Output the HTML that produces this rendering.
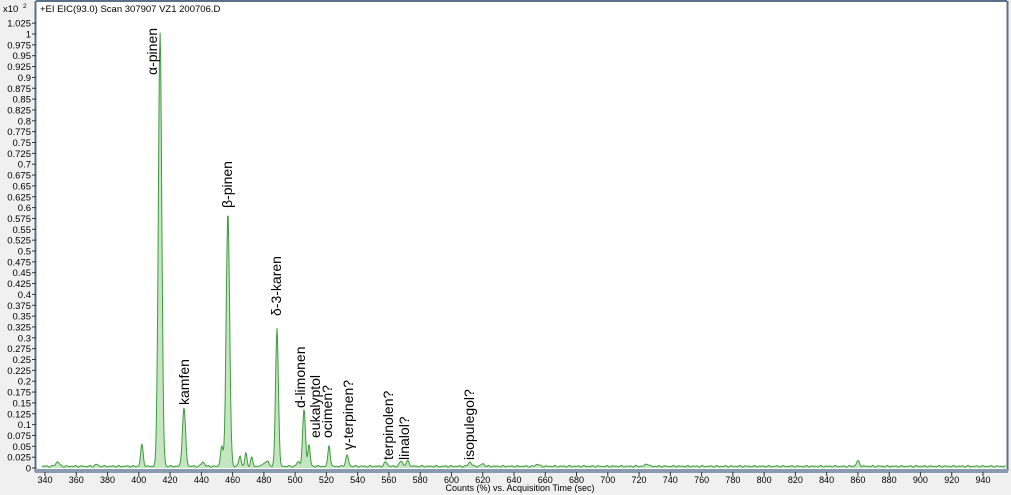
<!DOCTYPE html>
<html><head><meta charset="utf-8"><style>
html,body{margin:0;padding:0;background:#f0f0f0;}
svg{display:block;font-family:"Liberation Sans",sans-serif;}
</style></head><body>
<svg id="s" width="1011" height="495" xmlns="http://www.w3.org/2000/svg">
<rect x="0" y="0" width="1011" height="495" fill="#f0f0f0"/>
<rect x="36" y="1" width="971" height="470" fill="#fff"/>
<line x1="36" y1="1" x2="1007" y2="1" stroke="#5b7088" stroke-width="2"/>
<line x1="1007.5" y1="1" x2="1007.5" y2="471" stroke="#5b7088" stroke-width="2"/>
<line x1="35.5" y1="1" x2="35.5" y2="472" stroke="#5b7088" stroke-width="2"/>
<rect x="35" y="469" width="973" height="4" fill="#8a9bb0"/>
<text x="40" y="12" font-size="9.5" fill="#000">+EI EIC(93.0) Scan 307907 VZ1 200706.D</text>
<text x="3" y="12" font-size="9.5" fill="#000">x10</text><text x="23" y="8" font-size="6.5">2</text>
<g id="yt"></g><g id="xt"></g>
<path id="pf" fill="#b6e0b0" fill-opacity="0.8" stroke="none"/>
<path id="pl" fill="none" stroke="#3d9a3d" stroke-width="1"/>
<text x="520" y="491" font-size="9" text-anchor="middle">Counts (%) vs. Acquisition Time (sec)</text>
<g font-size="14" fill="#000" id="lab"></g>
</svg>
<script>
var NS="http://www.w3.org/2000/svg";
function X(t){return 45+(t-340)*1.5633;}
function Y(v){return 468-v*434;}
function el(p,tag,a,txt){var e=document.createElementNS(NS,tag);for(var k in a)e.setAttribute(k,a[k]);if(txt!==undefined)e.textContent=txt;document.getElementById(p).appendChild(e);return e;}
for(var i=0;i<=41;i++){var v=i*0.025,y=Y(v);var s=(Math.round(v*1000)/1000).toString();
el("yt","line",{x1:32,y1:y,x2:36,y2:y,stroke:"#333","stroke-width":1});
el("yt","text",{x:31,y:y+3.5,"font-size":9.5,"text-anchor":"end"},s);}
for(var t=340;t<=940;t+=20){var x=X(t);el("xt","line",{x1:x,y1:472,x2:x,y2:476,stroke:"#333"});
el("xt","text",{x:x,y:483,"font-size":9,"text-anchor":"middle"},t);}
var pk=[[413.6,1.0,1.1],[428.9,0.135,1.0],[457,0.585,1.1],[488.4,0.32,0.9],[505.7,0.13,0.9],[508.9,0.05,0.7],[521.7,0.05,0.7],[533.2,0.025,0.9],[402,0.05,0.8],[453,0.045,0.8],[464.7,0.025,0.7],[468.5,0.03,0.7],[472.2,0.02,0.7],[441,0.01,1],[348,0.01,1.2],[558,0.01,1],[567.8,0.012,1],[572,0.012,1],[611.8,0.01,1],[860,0.012,1],[725,0.006,1],[480,0.008,1],[482.5,0.012,0.8],[502,0.01,1],[373,0.004,1],[620,0.006,1],[655,0.005,1]];
var d="",f="M"+X(338)+","+Y(0);
for(var t=338;t<=958;t+=0.4){var v=0.004+0.002*Math.sin(t*1.7)*Math.sin(t*0.37);
for(var j=0;j<pk.length;j++){var q=pk[j];var z=(t-q[0])/q[2];if(Math.abs(z)<6)v+=q[1]*Math.exp(-0.5*z*z);}
var x=X(t);if(x>1006)break;var p=x.toFixed(1)+","+Y(v).toFixed(1);d+=(d?"L":"M")+p;f+="L"+p;}
f+="L1006,"+Y(0)+"Z";
document.getElementById("pl").setAttribute("d",d);document.getElementById("pf").setAttribute("d",f);
var L=[["α-pinen",157,75],["kamfen",189,405],["β-pinen",232,208],["δ-3-karen",281,316],["d-limonen",305,408],["eukalyptol",320,438],["ocimen?",332,438],["γ-terpinen?",353,450],["terpinolen?",393,460],["linalol?",409,460],["isopulegol?",474,460]];
L.forEach(function(l){el("lab","text",{x:l[1],y:l[2],transform:"rotate(-90 "+l[1]+" "+l[2]+")"},l[0]);});
</script>
</body></html>
